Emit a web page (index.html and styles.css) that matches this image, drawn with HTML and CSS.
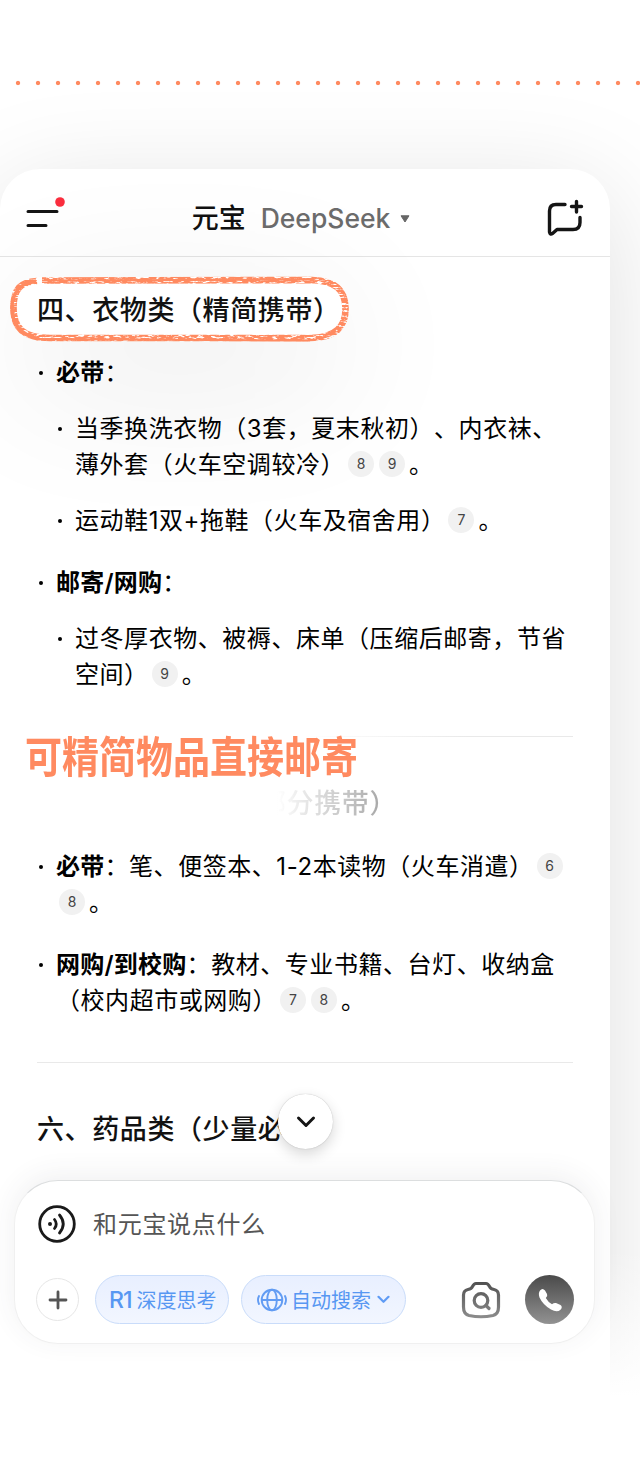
FILE: index.html
```html
<!DOCTYPE html>
<html lang="zh-CN">
<head>
    <meta charset="UTF-8">
    <meta name="viewport" content="width=device-width, initial-scale=1.0">
    <title>元宝 DeepSeek</title>
    <link rel="stylesheet" href="styles.css">
</head>
<body>
    <div class="dots"></div>
    <div class="phone">
        <header class="topbar">
            <div class="menu">
                <svg width="40" height="36" viewBox="0 0 40 36">
                    <path d="M2 15.5H31M2 29.5H20" stroke="#151515" stroke-width="3" stroke-linecap="round"/>
                    <circle cx="34" cy="6" r="4.8" fill="#fb2e3e"/>
                </svg>
            </div>
            <div class="title">
                <span class="name">元宝</span>
                <span class="model">DeepSeek</span>
                <svg width="10" height="8" viewBox="0 0 10 8"><path d="M1 .8H9L5 7Z" fill="#666" stroke="#666" stroke-linejoin="round"/></svg>
            </div>
            <svg class="new-chat" width="38" height="40" viewBox="0 0 38 40" fill="none" stroke="#151515" stroke-width="3.4" stroke-linecap="round" stroke-linejoin="round">
                <path d="M19 6.5H10Q3.500 6.500 3.500 13V34Q4 37 6.500 35.500L11 31.500H27Q34 31.500 34 24.500V19.500M30.500 3.500V14M25.500 8.500H35.500"/>
            </svg>
        </header>

        <main class="answer">
            <div class="marked">
                <svg class="marker" width="350" height="80" viewBox="0 0 350 80" fill="none">
                    <defs>
                        <filter id="brush" x="-5%" y="-10%" width="110%" height="120%">
                            <feTurbulence type="fractalNoise" baseFrequency="0.16 0.6" numOctaves="3" seed="7" result="n"/>
                            <feColorMatrix in="n" type="matrix" values="0 0 0 0 0  0 0 0 0 0  0 0 0 0 0  0 0 0 -5 3.5" result="m"/>
                            <feComposite in="SourceGraphic" in2="m" operator="in"/>
                        </filter>
                    </defs>
                    <rect x="8" y="8" width="334" height="62" rx="31" fill="#fff"/>
                    <g stroke="#ff8a60">
                        <path stroke-width="6.6" filter="url(#brush)" d="M38 11.500L308 11C332 12 341 21 341.500 39S332 69 306 69H46C19 69 9.500 59 9.500 39S17 13 33 12"/>
                        <path stroke-width="3.400" d="M32 12C15 14 8 25 8 39S15 65 34 70"/>
                        <path stroke-width="2" d="M38 11.500L308 10.500M34 70L306 71.500"/>
                    </g>
                </svg>
                <h3>四、衣物类（精简携带）</h3>
            </div>
            <ul class="list">
                <li><b>必带</b>：
                    <ul>
                        <li>当季换洗衣物（3套，夏末秋初）、内衣袜、<br>薄外套（火车空调较冷）<i>8</i><i>9</i>。</li>
                        <li>运动鞋1双+拖鞋（火车及宿舍用）<i>7</i>。</li>
                    </ul>
                </li>
                <li><b>邮寄/网购</b>：
                    <ul>
                        <li>过冬厚衣物、被褥、床单（压缩后邮寄，节省<br>空间）<i>9</i>。</li>
                    </ul>
                </li>
            </ul>

            <div class="faded">
                <hr>
                <h3>部分携带）</h3>
                <p class="caption">可精简物品直接邮寄</p>
            </div>
            <ul class="list">
                <li><b>必带</b>：笔、便签本、1-2本读物（火车消遣）<i>6</i><br><i>8</i>。</li>
                <li><b>网购/到校购</b>：教材、专业书籍、台灯、收纳盒<br>（校内超市或网购）<i>7</i><i>8</i>。</li>
            </ul>

            <hr>
            <div class="last">
                <h3>六、药品类（少量必</h3>
                <button class="scroll-down">
                    <svg width="20" height="14" viewBox="0 0 20 14"><path d="M2.500 3L10 10.500L17.500 3" fill="none" stroke="#151515" stroke-width="3" stroke-linecap="round" stroke-linejoin="round"/></svg>
                </button>
            </div>
        </main>

        <div class="composer">
            <div class="row input-row">
                <svg width="38" height="38" viewBox="0 0 38 38" fill="none" stroke="#1a1a1a" stroke-width="2.800" stroke-linecap="round">
                    <circle cx="19" cy="19" r="17.300"/>
                    <circle cx="12" cy="19" r="2" fill="#1a1a1a" stroke="none"/>
                    <path d="M16.500 14.500Q20 19 16.500 23.500M21.500 10Q29 19 21.500 28"/>
                </svg>
                <span class="placeholder">和元宝说点什么</span>
            </div>
            <div class="row tools">
                <button class="plus">
                    <svg width="20" height="20" viewBox="0 0 20 20"><path d="M10 2V18M2 10H18" stroke="#555" stroke-width="2.800" stroke-linecap="round"/></svg>
                </button>
                <button class="pill think"><span class="r1">R1</span>深度思考</button>
                <button class="pill search">
                    <svg width="30" height="24" viewBox="0 0 30 24" fill="none" stroke="#629cf3" stroke-width="1.900" stroke-linecap="round">
                        <circle cx="15" cy="12" r="10.300"/>
                        <ellipse cx="15" cy="12" rx="4.800" ry="10.300"/>
                        <path d="M5 12H25M2 8Q0 12 2 16M28 8Q30 12 28 16"/>
                    </svg>
                    <span>自动搜索</span>
                    <svg class="caret" width="13" height="9" viewBox="0 0 13 9"><path d="M1.500 1.800L6.500 6.800L11.500 1.800" fill="none" stroke="#5f9bf5" stroke-width="2.200" stroke-linecap="round" stroke-linejoin="round"/></svg>
                </button>
                <svg class="camera" width="40" height="40" viewBox="0 0 40 40" fill="none" stroke="url(#grey)" stroke-width="3.200" stroke-linecap="round" stroke-linejoin="round">
                    <defs>
                        <linearGradient id="grey" gradientUnits="userSpaceOnUse" x1="0" y1="2" x2="0" y2="38"><stop stop-color="#505050"/><stop offset="1" stop-color="#8c8c8c"/></linearGradient>
                    </defs>
                    <path d="M15 3.500H25Q27 3.500 28.500 6.500Q29.500 9 33 9.500Q37.500 10.500 37.500 15V27Q37.500 34 32 35.500Q20 38 8 35.500Q2.500 34 2.500 27V15Q2.500 10.500 7 9.500Q10.500 9 11.500 6.500Q13 3.500 15 3.500Z"/>
                    <circle cx="20" cy="20.500" r="6.800"/>
                    <path d="M25 25.500L28 28.500"/>
                </svg>
                <button class="call">
                    <svg width="26" height="26" viewBox="0 0 26 26"><path d="M3 3.500Q5.500 .5 8 3.500L10 7Q11 9 8.800 11Q11 15 15 17.300Q17 15.500 19 16L23.500 18Q26 20 23.500 22.800Q20 26 14 22.500Q6 18 2.500 10.500Q1 6 3 3.500Z" fill="#fff"/></svg>
                </button>
            </div>
        </div>
    </div>
</body>
</html>
```
FILE: styles.css
```css
* {
    box-sizing: border-box;
}
body {
    margin: 0;
    height: 1466px;
    overflow: hidden;
    background: #fff;
    color: #111;
    font-family: Inter, "Noto Sans CJK SC", sans-serif;
    text-spacing-trim: space-all;
}
h3, p, ul {
    margin: 0;
    padding: 0;
}
button {
    border: none;
    padding: 0;
    font-family: inherit;
}
svg {
    display: block;
    flex: none;
}
.dots {
    height: 6px;
    margin: 80px 0 83px 7.5px;
    background: radial-gradient(circle, #ff8a60 1.7px, transparent 2.6px) 0 0 / 20px 6px repeat-x;
}
.phone {
    position: relative;
    width: 610px;
    height: 1290px;
    border-radius: 40px;
    background: #fff;
    box-shadow: 0 22px 110px rgba(0, 0, 0, 0.13);
}
/* lets the bottom of the phone melt into the page */
.phone::after {
    content: "";
    position: absolute;
    left: 0;
    top: 1080px;
    width: 640px;
    height: 218px;
    background: linear-gradient(rgba(255, 255, 255, 0), #fff 68%);
}
.topbar {
    display: flex;
    align-items: center;
    justify-content: space-between;
    height: 88px;
    padding: 12px 26px 0 26px;
    border-bottom: 1px solid #e5e5e5;
}
.menu {
    width: 60px;
    margin-top: -10px;
}
.title {
    display: flex;
    align-items: center;
    margin-right: 30px;
    font-size: 27px;
    line-height: 40px;
}
.name {
    font-weight: 500;
}
.model {
    margin: -2px 10px 0 15px;
    font-size: 26.5px;
    font-weight: 500;
    color: #6c6c6c;
}
.new-chat {
    margin-top: -2px;
}
.answer {
    height: 923px;
    padding: 34px 37px 0;
    white-space: nowrap;
}
.marked {
    position: relative;
}
.marked h3 {
    top: 2px;
}
.marked::before {
    content: "";
    position: absolute;
    left: -22px;
    top: -12px;
    width: 330px;
    height: 60px;
    border-radius: 30px;
    box-shadow: 0 36px 150px rgba(0, 0, 0, 0.12);
    clip-path: inset(-120px -300px -400px -15px);
}
.marker {
    position: absolute;
    left: -33px;
    top: -22px;
}
h3 {
    position: relative;
    font-size: 27px;
    font-weight: 500;
    letter-spacing: 0.6px;
    line-height: 36px;
}
.list {
    position: relative;
    margin-top: 28px;
    list-style: none;
    font-size: 24px;
    letter-spacing: 0.55px;
    line-height: 36px;
    color: #000;
}
.list ul {
    list-style: none;
}
.list li {
    position: relative;
    padding-left: 19px;
}
.list > li + li {
    margin-top: 26px;
}
.list ul li {
    margin-top: 20px;
}
.list li::before {
    content: "";
    position: absolute;
    left: 2px;
    top: 16px;
    width: 4px;
    height: 4px;
    border-radius: 50%;
    background: #000;
}
b {
    font-weight: 600;
    letter-spacing: 0.25px;
}
i {
    display: inline-block;
    width: 26px;
    height: 26px;
    margin: 0 2px 0 3px;
    border-radius: 50%;
    background: #f1f1f1;
    font-size: 14px;
    font-style: normal;
    letter-spacing: 0;
    line-height: 26px;
    text-align: center;
    vertical-align: 4px;
    color: #444;
}
i:last-child {
    margin-right: 4px;
}
hr {
    height: 1px;
    margin: 43px 0 0;
    border: none;
    background: #e9e9e9;
}
.faded {
    position: relative;
}
.faded hr {
    margin-top: 43px;
    background: linear-gradient(90deg, transparent 50%, #e9e9e9 80%);
}
.faded h3 {
    top: 1px;
    width: 130px;
    margin: 48px 0 0 222px;
    background: linear-gradient(90deg, transparent 14%, #aaa 92%);
    background-clip: text;
    color: transparent;
}
.caption {
    position: absolute;
    left: -12px;
    top: 0;
    font-size: 37px;
    font-weight: 700;
    line-height: 44px;
    color: #ff8a60;
    transform: scaleY(1.17);
}
.last {
    position: relative;
    margin-top: 48px;
}
.last h3 {
    top: 1px;
}
.scroll-down {
    position: absolute;
    left: 241px;
    top: -17px;
    display: flex;
    align-items: center;
    justify-content: center;
    width: 55px;
    height: 55px;
    border-radius: 50%;
    background: #fff;
    box-shadow: 0 0 1px rgba(0, 0, 0, 0.3), 0 5px 14px rgba(0, 0, 0, 0.16);
}
.composer {
    position: relative;
    z-index: 1;
    width: 581px;
    height: 164px;
    margin-left: 14px;
    padding: 0 20px 0 21px;
    border: 1px solid #f0f0f0;
    border-top-color: #dcdedf;
    border-radius: 44px;
    background: #fff;
    box-shadow: 0 -5px 28px rgba(60, 70, 80, 0.08);
}
.row {
    display: flex;
    align-items: center;
}
.input-row {
    height: 86px;
    padding-left: 2px;
}
.placeholder {
    margin: -4px 0 0 17px;
    font-size: 24px;
    letter-spacing: 0.7px;
    color: #555;
}
.tools {
    height: 65px;
}
.plus {
    display: flex;
    align-items: center;
    justify-content: center;
    width: 43px;
    height: 43px;
    border: 1px solid #e6e6e6;
    border-radius: 50%;
    background: #fff;
}
.pill {
    display: flex;
    align-items: center;
    height: 49px;
    border: 1px solid #c9dcfa;
    border-radius: 25px;
    background: linear-gradient(#e8efff, #f2f6ff);
    font-size: 20px;
    color: #5797f2;
}
.think {
    width: 134px;
    margin-left: 16px;
    padding-left: 13px;
}
.r1 {
    margin-right: 5px;
    font-size: 23px;
    font-weight: 500;
    letter-spacing: -1px;
}
.search {
    width: 165px;
    margin-left: 12px;
    padding-left: 15px;
}
.search span {
    margin: 0 6px 0 4px;
}
.camera {
    margin: 0 24px 0 auto;
}
.call {
    display: flex;
    align-items: center;
    justify-content: center;
    width: 49px;
    height: 49px;
    border-radius: 50%;
    background: linear-gradient(#4a4a4a, #929292);
}
```
